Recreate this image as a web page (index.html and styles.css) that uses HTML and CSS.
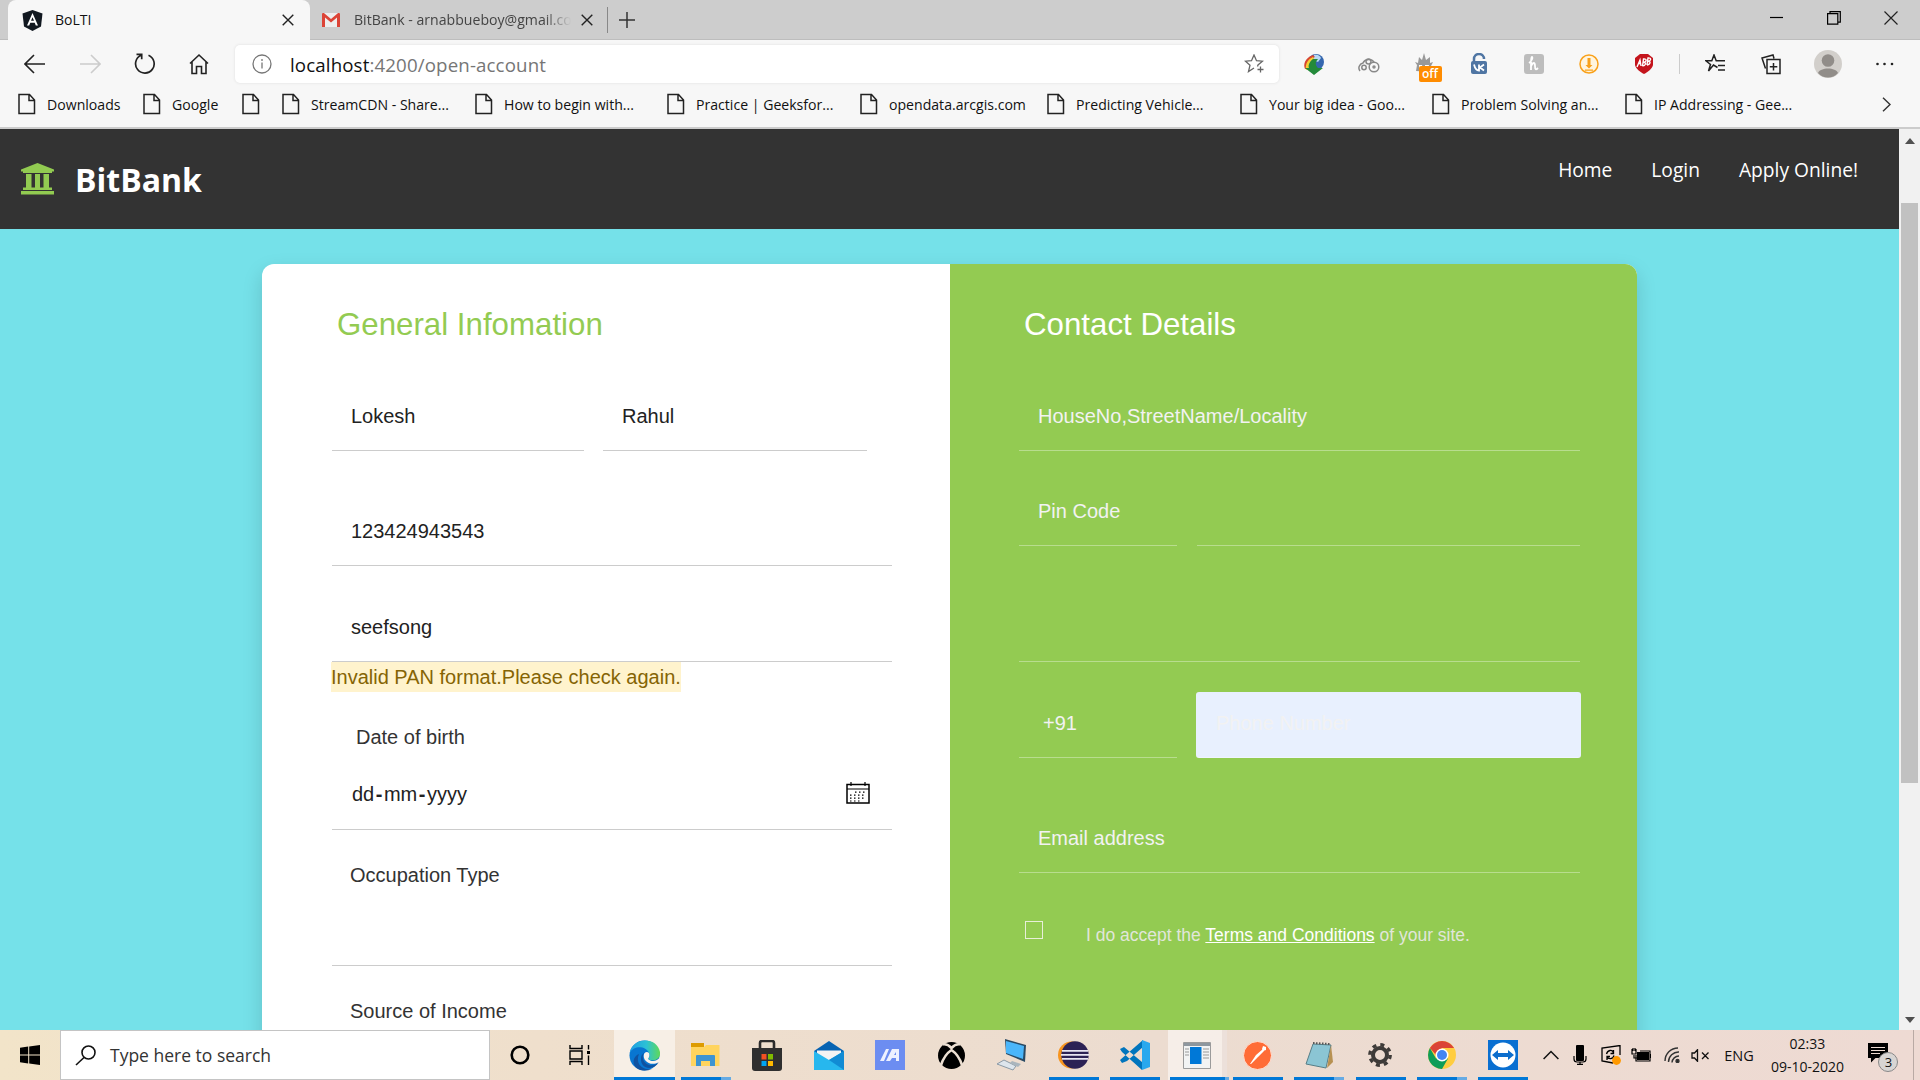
FILE: index.html
```html
<!DOCTYPE html>
<html lang="en">
<head>
<meta charset="utf-8">
<title>BoLTI</title>
<link rel="stylesheet" href="styles.css">
</head>
<body>
<svg width="0" height="0" class="defs">
  <symbol id="page" viewBox="0 0 18 22"><path d="M1 1.5h10.5l5 5.5v13.500H1z M11 1.500V7.500h5.500" fill="none" stroke="#222" stroke-width="1.500"/></symbol>
  <symbol id="x" viewBox="0 0 12 12"><path d="M.7.7l10.600 10.600M11.300.7L.7 11.300" fill="none" stroke="#222" stroke-width="1.400"/></symbol>
</svg>
<div class="screen">
  <header class="tabs">
    <div class="tab active">
      <svg class="favicon" width="21" height="21" viewBox="0 0 21 21"><path d="M10.500 0L20.500 3.500 19 16.500 10.500 21 2 16.500.5 3.500z" fill="#111820"/><path d="M10.500 3L5 15.500h2.200l1.100-2.800h4.400l1.100 2.800H16zM10.500 7.200l1.500 3.600H9z" fill="#fff" fill-rule="evenodd"/></svg>
      <span class="tab-title">BoLTI</span>
      <svg class="close" width="12" height="12"><use href="#x"/></svg>
    </div>
    <div class="tab second">
      <svg class="favicon" width="18" height="14" viewBox="0 0 18 14"><path d="M1 0h16v14H1z" fill="#eee"/><path d="M0 1.500V14h3V4.500l6 5 6-5V14h3V1.500C18 0 16.500-.3 15.500.5L9 6 2.500.5C1.500-.3 0 0 0 1.500z" fill="#dc4437"/></svg>
      <span class="tab-title fade">BitBank - arnabbueboy@gmail.com</span>
      <svg class="close" width="12" height="12"><use href="#x"/></svg>
    </div>
    <svg class="newtab" width="18" height="18" viewBox="0 0 18 18"><path d="M9 1v16M1 9h16" stroke="#333" stroke-width="1.500"/></svg>
    <div class="winbtns">
      <svg width="14" height="14"><path d="M0 6.500h13" stroke="#000" stroke-width="1.200"/></svg>
      <svg width="14" height="14" fill="none" stroke="#000" stroke-width="1.200"><path d="M.6 2.600h10.200v10.600H.6zM3 2.500V.6h10.300v10.600H11"/></svg>
      <svg width="14" height="14"><path d="M.5.5l13 13M13.500.5l-13 13" stroke="#222" stroke-width="1.200"/></svg>
    </div>
  </header>

  <div class="toolbar">
    <div class="nav">
      <svg width="22" height="20" fill="none" stroke="#222" stroke-width="1.600"><path d="M21 10H1M10 1L1 10l9 9"/></svg>
      <svg width="22" height="20" fill="none" stroke="#ccc" stroke-width="1.600"><path d="M1 10h20M12 1l9 9-9 9"/></svg>
      <svg width="22" height="22" fill="none" stroke="#222" stroke-width="1.700"><path d="M14.500 2.200A9.300 9.300 0 1 1 7 2.300M2.500 1.300h5.200v5"/></svg>
      <svg width="20" height="22" fill="none" stroke="#222" stroke-width="1.600"><path d="M1 10.500L10 2l9 8.500M3 9v11.500h4.500v-7h5v7H17V9"/></svg>
    </div>
    <div class="address">
      <svg width="20" height="20" fill="none" stroke="#777" stroke-width="1.300"><circle cx="10" cy="10" r="9"/><path d="M10 8.500v6M10 5v2"/></svg>
      <span class="url"><b>localhost</b>:4200/open-account</span>
      <svg class="star" width="20" height="20" viewBox="0 0 20 20" fill="none" stroke="#666" stroke-width="1.300"><path d="M13.500 12.500L14 11l4.500-3.800-6-.5L10 1 7.500 6.700l-6 .5L6 11.200 4.500 17.500 10 14M16.500 12.500v6M13.500 15.500h6"/></svg>
    </div>
    <div class="exts">
      <svg width="22" height="22" viewBox="0 0 22 22"><circle cx="13" cy="9" r="8" fill="#3567ae"/><path d="M11 2c4-1 6 1 7 3l-3 4-5-2z" fill="#b8d8f4"/><path d="M10 2C2 5 0 11 2 16l3-1C5 10 7 6 12 4z" fill="#d8452f"/><path d="M10 4C5 6 2 11 3 17l3-1c0-5 1-8 5-10z" fill="#f3cf35"/><path d="M10 6c-4 3-5 7-4 9H2l9 7 9-7h-5c-3-3-3-6 0-9z" fill="#238a3a"/></svg>
      <svg width="22" height="18" viewBox="0 0 22 18" fill="none" stroke="#888" stroke-width="1.500"><path d="M2 16a5 5 0 0 1 3-8 6 5 0 0 1 11-1"/><circle cx="16" cy="12" r="4.800"/><circle cx="10.500" cy="6.500" r="2.500"/><circle cx="16" cy="12" r="1"/><circle cx="6" cy="12.500" r="2.200"/></svg>
      <div class="off-wrap"><svg width="22" height="22" viewBox="0 0 22 22"><path d="M3 18l1-6-2-3 3 1 1-6 3 3 2-7 2 7 4-3v6l3-1-2 4v6z" fill="#999"/><path d="M6 12h3l1 4H6zM12 12h4l-1 4h-3z" fill="#fff"/></svg><span class="off">off</span></div>
      <svg width="18" height="22" viewBox="0 0 18 22"><path d="M4 9V6a5 5 0 0 1 10 0" fill="none" stroke="#4f75a3" stroke-width="2.500"/><rect x="1" y="8" width="16" height="13" rx="2" fill="#4f75a3"/><path d="M4 11.500c1 4 3 6 5 6v-6M14 11.500l-4 3 4 3" fill="none" stroke="#fff" stroke-width="1.800"/></svg>
      <svg width="20" height="20" viewBox="0 0 20 20"><rect width="20" height="20" rx="3" fill="#bdbdbd"/><path d="M5 9c3-2 4-6 3-6S7 8 7 16M7 12c2-4 4-4 4 0 0 4 1 4 3 2" fill="none" stroke="#fff" stroke-width="1.800"/></svg>
      <svg width="20" height="20" viewBox="0 0 20 20"><circle cx="10" cy="10" r="9" fill="#fff5df" stroke="#f9a11b" stroke-width="1.500"/><path d="M8.500 4h3v7h2L10 14.500 6.500 11h2zM6 15.500h8v1.200H6z" fill="#f9a11b"/></svg>
      <svg width="20" height="20" viewBox="0 0 20 20"><path d="M6 0h8l5 4v7c-1 4-5 7-9 9-4-2-8-5-9-9V4z" fill="#c4141c"/><path d="M3 13l3-7 1 6M4 10l3-1M8.500 12l1-7c4-.5 3 3 0 3.300 3.500 0 2 3.700-1 3.700M13 11l1-7c4-.5 3 3 0 3.200 3.500 0 2 3.700-1 3.800" fill="none" stroke="#fff" stroke-width="1.400"/></svg>
    </div>
    <div class="sep"></div>
    <div class="edgebtns">
      <svg width="22" height="20" fill="none" stroke="#222" stroke-width="1.500"><path d="M12.500 13.500l-4-2.500L3.500 17 5.500 10.500.8 6.800h6L9 1l2.200 5.800H20M13 11.500h7M13 16h7"/></svg>
      <svg width="22" height="21" fill="none" stroke="#222" stroke-width="1.500"><path d="M4.500 14.500L1 4l11-3 1 3.500M6 5.500h13v14H6zM12.500 9v7.500M8.800 12.700h7.500"/></svg>
      <svg width="28" height="28" viewBox="0 0 28 28"><circle cx="14" cy="14" r="14" fill="#d2cfcb"/><circle cx="14" cy="10.500" r="6.300" fill="#918d89"/><path d="M4 23c2-6 18-6 20 0-5 6-15 6-20 0z" fill="#918d89"/></svg>
      <svg width="20" height="4"><g fill="#222"><circle cx="2.500" cy="2" r="1.300"/><circle cx="9.500" cy="2" r="1.300"/><circle cx="17" cy="2" r="1.300"/></g></svg>
    </div>
  </div>

  <div class="bookmarks">
    <div><svg><use href="#page"/></svg><span>Downloads</span></div>
    <div><svg><use href="#page"/></svg><span>Google</span></div>
    <div><svg><use href="#page"/></svg></div>
    <div><svg><use href="#page"/></svg><span>StreamCDN - Share...</span></div>
    <div><svg><use href="#page"/></svg><span>How to begin with...</span></div>
    <div><svg><use href="#page"/></svg><span>Practice | Geeksfor...</span></div>
    <div><svg><use href="#page"/></svg><span>opendata.arcgis.com</span></div>
    <div><svg><use href="#page"/></svg><span>Predicting Vehicle...</span></div>
    <div><svg><use href="#page"/></svg><span>Your big idea - Goo...</span></div>
    <div><svg><use href="#page"/></svg><span>Problem Solving an...</span></div>
    <div><svg><use href="#page"/></svg><span>IP Addressing - Gee...</span></div>
    <svg class="more" viewBox="0 0 9 15"><path d="M1 .7l7 6.800-7 6.800" fill="none" stroke="#333" stroke-width="1.400"/></svg>
  </div>

  <div class="viewport">
    <main class="site">
      <nav class="navbar">
        <svg class="bank" width="33" height="32" viewBox="0 0 33 32"><path d="M16.500 0L33 6.500V8.500H31V10H2V8.500H0V6.500zM5 11h5.500v14H5zM14 11h5v14h-5zM22.500 11H28v14h-5.500zM2 24.500h29V27H2zM0 28h33v3.500H0z" fill="#92cb51"/></svg>
        <span class="brand">BitBank</span>
        <div class="links"><a>Home</a><a>Login</a><a>Apply Online!</a></div>
      </nav>
      <form class="card">
        <section class="general">
          <h2>General Infomation</h2>
          <div class="row names"><div class="field">Lokesh</div><div class="field">Rahul</div></div>
          <div class="field aadhaar">123424943543</div>
          <div class="field pan">seefsong</div>
          <div class="warn">Invalid PAN format.Please check again.</div>
          <div class="label dob">Date of birth</div>
          <div class="field date"><span>dd<i>-</i>mm<i>-</i>yyyy</span>
            <svg width="24" height="24" viewBox="0 0 24 24" fill="none" stroke="#000"><path d="M1 3.500h22v18.500H1z" stroke-width="1.500"/><path d="M1 8h22M5 1v4M19 1v4" stroke-width="1.200"/><path d="M9 11.200h10M4 14.200h15M4 17.200h15M4 20h11" stroke-width="1.200" stroke-dasharray="1.500 2.500"/></svg>
          </div>
          <div class="label occupation">Occupation Type</div>
          <div class="field select"></div>
          <div class="label income">Source of Income</div>
        </section>
        <section class="contact">
          <h2>Contact Details</h2>
          <div class="field house">HouseNo,StreetName/Locality</div>
          <div class="row pin"><div class="field">Pin Code</div><div class="field"></div></div>
          <div class="field state"></div>
          <div class="row phone"><div class="field code">+91</div><div class="field number">Phone Number</div></div>
          <div class="field email">Email address</div>
          <div class="terms"><span class="box"></span><p>I do accept the <a>Terms and Conditions</a> of your site.</p></div>
        </section>
      </form>
    </main>
    <div class="scrollbar">
      <svg width="10" height="6"><path d="M0 6l5-6 5 6z" fill="#505050"/></svg>
      <div class="thumb"></div>
      <svg width="10" height="6"><path d="M0 0l5 6 5-6z" fill="#505050"/></svg>
    </div>
  </div>

  <footer class="taskbar">
    <div class="start"><svg width="20" height="20" viewBox="0 0 20 20"><path d="M0 2.800L8.200 1.600V9.500H0zM9.200 1.400L20 0v9.500H9.200zM0 10.500h8.200v7.900L0 17.200zM9.200 10.500H20V20L9.200 18.600z"/></svg></div>
    <div class="search"><svg width="22" height="21" viewBox="0 0 22 21" fill="none" stroke="#111" stroke-width="1.600"><circle cx="13.500" cy="7.500" r="6.500"/><path d="M9 12.500L1 20"/></svg><span>Type here to search</span></div>
    <div class="shell">
      <svg width="20" height="20"><circle cx="10" cy="10" r="8.300" fill="none" stroke="#000" stroke-width="2.600"/></svg>
      <svg width="22" height="20" fill="none" stroke="#000" stroke-width="1.400"><path d="M1 0v3.500h12V0M1 20v-3.500h12V20M1 6h12v8H1zM19.500 0v4.500M19.500 10.500V20"/><path d="M18 6h3v3h-3z" fill="#000" stroke="none"/></svg>
    </div>
    <div class="apps">
      <div class="app on wide"><svg width="31" height="31" viewBox="0 0 31 31"><defs><linearGradient id="eg"><stop offset="0" stop-color="#209ee2"/><stop offset=".55" stop-color="#2cc1d5"/><stop offset="1" stop-color="#60d958"/></linearGradient></defs><circle cx="15.500" cy="15.500" r="15" fill="#0876d1"/><path d="M.8 13C3-3 28-4 31 12c1 8-7 10-12 7 2-2 2-4 1-6-3-7-15-8-19.200 0z" fill="url(#eg)"/><path d="M10 14c-4 9 3 17 13 15-5 2-10 2-14 0-7-4-5-13 1-15z" fill="#1052a0"/><path d="M16 12c-3 2-4 10 4 13 4 1 8-1 10-3-5 9-19 8-18-4 0-2 1-4 4-6z" fill="#1052a0"/><path d="M20 13c1 3 0 4-1 6 3 3 9 3 12-2l-1 5c-8 5-17-1-15-8 1-2 3-3 5-1z" fill="#faf3ed"/></svg></div>
      <div class="app run stack"><svg width="29" height="26" viewBox="0 0 29 26"><path d="M0 1h13v7H0z" fill="#dd9b00"/><path d="M0 5h13l2-2h13.500v21H0z" fill="#ffd45e"/><path d="M5 24V14q0-1 1-1h17q1 0 1 1v10h-5v-5h-9v5z" fill="#3d94d1"/></svg></div>
      <div class="app"><svg width="30" height="31" viewBox="0 0 30 31"><path d="M8 9V3q0-2 2-2h10q2 0 2 2v6" fill="none" stroke="#2c2c2c" stroke-width="2.600"/><path d="M0 8h30v20q0 3-3 3H3q-3 0-3-3z" fill="#2f2f2f"/><path d="M9.500 14h5v5.500h-5z" fill="#f25022"/><path d="M16 14h5v5.500h-5z" fill="#7fba00"/><path d="M9.500 21h5v5h-5z" fill="#00a4ef"/><path d="M16 21h5v5h-5z" fill="#ffb900"/></svg></div>
      <div class="app"><svg width="30" height="29" viewBox="0 0 30 29"><path d="M0 10L15 0l15 10v5H0z" fill="#0763b2"/><path d="M3 9.500h24v8L15 24 3 16z" fill="#f3f3f3"/><path d="M0 10l15 9L30 10v19H0z" fill="#27b7ee"/><path d="M15 19L30 29V10z" fill="#118bd4"/></svg></div>
      <div class="app"><svg width="30" height="30"><path d="M0 0h30v30H0z" fill="#6c8df1"/><path d="M5 21L11 9h3L9 21zM11 21L17 9h7v12h-3v-3h-4l-2 3zM19 15h2v-3z" fill="#edf1ff"/></svg></div>
      <div class="app"><svg width="27" height="27" viewBox="0 0 27 27"><circle cx="13.500" cy="13.500" r="13.500"/><path d="M5 2.500c4-1 7 2 8.500 3.500C15 4.500 18 1.500 22 2.500M3 23C5 17 9 11 13.500 8 18 11 22 17 24 23" fill="none" stroke="#ecdfd2" stroke-width="2.600"/></svg></div>
      <div class="app"><svg width="30" height="32" viewBox="0 0 30 32"><path d="M8 0l21 6-1 17L9 15z" fill="#2a4a64"/><path d="M9 2l18 5-1 13-17-6z" fill="#4bb6fa"/><path d="M0 25l7-4 12 6-3 4z" fill="#dde5ec" stroke="#8a99a5"/><path d="M15 22l9 3-3 3-8-4z" fill="#aab5bd"/></svg></div>
      <div class="app run"><svg width="31" height="28" viewBox="0 0 31 28"><circle cx="13.500" cy="14" r="13.500" fill="#f7941e"/><circle cx="17" cy="14" r="13.700" fill="#2c2255"/><path d="M4 9.800h26M3 13.800h28M4 17.800h26" stroke="#e8e6f2" stroke-width="1.800"/></svg></div>
      <div class="app run"><svg width="30" height="30" viewBox="0 0 30 30"><path d="M0 9l4-2 18 15V30L2 12zM0 20l2 3 5-2L23 7V0z" fill="#0075bd"/><path d="M22 0l8 3v24l-8 3z" fill="#29a8ee"/></svg></div>
      <div class="app on stack tail"><svg width="28" height="27" viewBox="0 0 28 27"><path d="M.5.5h27v26H.5z" fill="#f2f3f3" stroke="#9b9b9b"/><path d="M1 1h26v3H1z" fill="#8e979e"/><path d="M7 5h11.500v17H7z" fill="#0078d7"/><path d="M2 7h4M2 10h4M2 13h4M20 7h6M20 10h6M20 13h6M20 16h6" stroke="#999"/></svg></div>
      <div class="app run"><svg width="29" height="29" viewBox="0 0 29 29"><circle cx="14.500" cy="14.500" r="14" fill="#ff6c37" stroke="#ffe1d5"/><path d="M7 23l6-9 7-6 1 2-6 6-7 7zM19 8l1-3 3 1v3l-3 1z" fill="#fff"/></svg></div>
      <div class="app run stack"><svg width="28" height="28" viewBox="0 0 28 28"><path d="M8 3l18 1-5 23L1 23z" fill="#8bc5d4" stroke="#577e87"/><path d="M26 4l2 17-6 6z" fill="#b79152"/><path d="M8 2l17 1" stroke="#555" stroke-width="2" stroke-dasharray="1.500 1.500"/></svg></div>
      <div class="app run"><svg width="24" height="24" viewBox="0 0 24 24"><circle cx="12" cy="12" r="7" fill="none" stroke="#3e3b39" stroke-width="4"/><circle cx="12" cy="12" r="10.200" fill="none" stroke="#3e3b39" stroke-width="3.400" stroke-dasharray="4 4.010"/></svg></div>
      <div class="app run stack"><svg width="28" height="28" viewBox="0 0 28 28"><circle cx="14" cy="14" r="14" fill="#ffcd40"/><path d="M1.900 7A14 14 0 0 0 14 28l6-10.500H8z" fill="#0f9d58"/><path d="M1.900 7A14 14 0 0 1 26.100 7H14l-6 7z" fill="#db4437"/><circle cx="14" cy="14" r="6.500" fill="#fff"/><circle cx="14" cy="14" r="5" fill="#4285f4"/></svg></div>
      <div class="app run"><svg width="30" height="30" viewBox="0 0 30 30"><path d="M0 0h30v30H0z" fill="#096fd1"/><circle cx="15" cy="15" r="12.500" fill="#fff"/><path d="M4 15l6-5v3h10v-3l6 5-6 5v-3H10v3z" fill="#0d6ecd"/></svg></div>
    </div>
    <div class="tray">
      <svg width="16" height="10" viewBox="0 0 16 10" fill="none" stroke="#111" stroke-width="1.500"><path d="M.6 9L8 1.500 15.400 9"/></svg>
      <svg width="14" height="20" viewBox="0 0 14 20"><rect x="3" width="8" height="16" rx="1"/><path d="M1 11v3q0 3 3 3h6q3 0 3-3v-3M7 17v2M4 19.300h6" fill="none" stroke="#000" stroke-width="1.200"/></svg>
      <svg width="20" height="20" viewBox="0 0 20 20" fill="none" stroke="#000" stroke-width="1.300"><path d="M12 18L1 16V3l18-2.500V10M5.500 9c1-4 6-5 7-1M12.500 5v3.500H9.500M13 10.500c-1 4-6 4-7 1M6 15v-3.500h3"/><circle cx="15.500" cy="15.500" r="4.400" fill="#f90" stroke="none"/></svg>
      <svg width="20" height="14" viewBox="0 0 20 14"><path d="M6 4h12v8H6z"/><path d="M5 7v6h14V3H9M3 7v3h3M19.500 6v4M1 1v5h4V1M2 3V0M4 3V0" fill="none" stroke="#000" stroke-width="1.200"/></svg>
      <svg width="16" height="16" viewBox="0 0 16 16" fill="none" stroke="#333" stroke-width="1.400"><path d="M1 14A13 13 0 0 1 14 1M4.500 15A10 10 0 0 1 15 5M8 15.500A7 7 0 0 1 15 9"/><circle cx="13.500" cy="14" r="1.500" fill="#222"/></svg>
      <svg width="19" height="13" viewBox="0 0 19 13" fill="none" stroke="#111" stroke-width="1.300"><path d="M1 4h2.500l3-3.300v11.600L3.500 9H1zM11 3.500l6.500 6.500M17.500 3.500L11 10"/></svg>
      <span class="lang">ENG</span>
      <div class="clock"><span>02:33</span><span>09-10-2020</span></div>
      <div class="notes"><svg width="22" height="20" viewBox="0 0 22 20"><path d="M0 0h20v15H7.500L3 19.500V15H0z"/><path d="M3 4.500h14M3 7.500h14M3 10.500h9" stroke="#eedbd2" stroke-width="1.200"/></svg><span class="badge">3</span></div>
      <div class="desk"></div>
    </div>
  </footer>
</div>
</body>
</html>
```
FILE: styles.css
```css
* { box-sizing: border-box; }
body { margin: 0; }
svg { display: block; flex: none; }
.defs { position: absolute; }
.screen { width: 1920px; height: 1080px; display: flex; flex-direction: column; overflow: hidden; font-family: "Open Sans", "Noto Sans", sans-serif; font-size: 14px; color: #111; }

/* tab strip */
.tabs { height: 40px; flex: none; display: flex; background: #cdcdcd; padding-left: 8px; box-shadow: inset 0 -1px #bdbdbd; }
.tab { display: flex; align-items: center; height: 40px; }
.tab .close { margin-left: auto; }
.tab-title { white-space: nowrap; margin-left: 12px; padding-bottom: 2px; }
.active { width: 302px; background: #f7f7f7; border-radius: 8px 8px 0 0; padding: 0 16px 0 14px; }
.second { width: 299px; padding: 0 15px 0 12px; color: #444; }
.second .tab-title { margin-left: 14px; width: 217px; overflow: hidden; font-size: 14.100px; }
.fade { -webkit-mask-image: linear-gradient(90deg, #000 88%, transparent); mask-image: linear-gradient(90deg, #000 88%, transparent); }
.second::after { content: ""; width: 1px; height: 26px; background: #888; margin-left: 14px; margin-right: -14px; }
.newtab { margin: 11px 0 0 9px; }
.winbtns { margin-left: auto; display: flex; align-items: center; height: 36px; gap: 43px; padding-right: 22px; }

/* toolbar */
.toolbar { height: 48px; flex: none; display: flex; align-items: center; background: #f7f7f7; }
.nav { width: 235px; display: flex; align-items: center; gap: 33px; padding-left: 24px; }
.address { width: 1044px; height: 38px; display: flex; align-items: center; background: #fff; border-radius: 5px; box-shadow: 0 0 3px #ddd; padding: 0 15px 0 17px; }
.url { margin-left: 18px; font-size: 18.700px; color: #767676; letter-spacing: .13px; }
.url b { font-weight: 400; color: #111; }
.star { margin-left: auto; }
.exts { display: grid; grid-template-columns: repeat(7, 55px); justify-items: center; align-items: center; margin-left: 7px; }
.off-wrap { position: relative; }
.off { position: absolute; left: 6px; top: 13px; width: 23px; height: 16px; border-radius: 2px; background: #ff8c00; color: #fff; font: 600 12px/15px "Open Sans", sans-serif; text-align: center; }
.sep { width: 1px; height: 20px; background: #ccc; margin: 0 7px 0 8px; }
.edgebtns { display: grid; grid-template-columns: 57px 55px 57px 57px; justify-items: center; align-items: center; }

/* bookmarks */
.bookmarks { height: 41px; flex: none; display: grid; grid-template-columns: 125px 99px 40px 193px 192px 193px 187px 193px 192px 193px 257px 9px; align-items: center; padding: 0 0 7px 18px; background: #f7f7f7; border-bottom: 2px solid #ccc; }
.bookmarks div { display: flex; align-items: center; gap: 11px; white-space: nowrap; height: 24px; font-size: 14.100px; }
.bookmarks div svg { width: 18px; height: 22px; }
.bookmarks .more { width: 9px; height: 15px; }

/* page */
.viewport { flex: 1; min-height: 0; display: flex; background: #75e1e9; }
.site { width: 1899px; overflow: hidden; font-family: "Liberation Sans", Arial, sans-serif; font-size: 20px; }
.navbar { height: 100px; background: #333; display: flex; align-items: center; padding: 0 41px 0 21px; font-family: "Open Sans", sans-serif; color: #fff; }
.brand { font-size: 32px; font-weight: 700; margin-left: 21px; }
.links { display: flex; gap: 39px; margin-left: auto; font-size: 19.200px; padding-bottom: 19px; }
.card { width: 1375px; height: 1000px; margin: 35px 0 0 262px; display: flex; background: #fff; border-radius: 12px; box-shadow: 0 8px 20px rgba(0,0,0,.15); overflow: hidden; }
.general { width: 688px; padding: 37px 58px 0 70px; color: #222; }
.contact { width: 687px; padding: 37px 57px 0 69px; background: #93cb52; color: #f2f2f2; }
h2 { margin: 0 0 36px 5px; font-size: 31.250px; font-weight: 400; line-height: 48px; color: #93cb52; }
.contact h2 { color: #fff; }
.row { display: flex; }
.field { height: 66px; line-height: 62px; padding-left: 19px; border-bottom: 1px solid #ccc; white-space: nowrap; }
.contact .field { border-color: rgba(255,255,255,.35); }
.label { line-height: 24px; color: #333; }
.names { gap: 19px; }
.names .field:first-child { width: 252px; }
.names .field:last-child { width: 264px; }
.aadhaar { margin-top: 49px; }
.pan { margin-top: 30px; }
.warn { display: inline-block; vertical-align: top; height: 30px; line-height: 30px; margin-left: -1px; background: #fff3cd; color: #856404; white-space: nowrap; }
.dob { margin: 33px 0 0 24px; }
.date { display: flex; justify-content: space-between; margin-top: 15px; padding: 0 22px 0 20px; line-height: 60px; }
.date i { font-style: normal; font-weight: 700; margin: 0 1.500px; }
.date svg { margin-top: 17px; }
.occupation { margin: 33px 0 0 18px; }
.select { margin-top: 13px; }
.income { margin: 33px 0 0 18px; }
.pin { gap: 20px; margin-top: 29px; }
.pin .field:first-child, .code { width: 158px; }
.pin .field:last-child { width: 383px; }
.state { margin-top: 50px; }
.phone { gap: 19px; margin-top: 30px; margin-right: -1px; }
.contact .code { padding-left: 24px; }
.contact .number { width: 385px; padding-left: 20px; background: #e8f0fe; border-radius: 3px; }
.email { margin-top: 49px; }
.terms { display: flex; margin: 48px 0 0 6px; }
.box { width: 18px; height: 18px; border: 1px solid #e8efd9; }
.terms p { margin: 4px 0 0 43px; font-size: 17.500px; line-height: 20px; color: #e1e6da; white-space: nowrap; }
.terms a { color: #fff; text-decoration: underline; }
.scrollbar { width: 21px; background: #f1f1f1; display: flex; flex-direction: column; align-items: center; padding: 9px 0 7px; }
.thumb { width: 17px; height: 580px; margin-top: 59px; margin-bottom: auto; background: #c1c1c1; }

/* taskbar */
.taskbar { height: 50px; flex: none; display: flex; background: linear-gradient(90deg, #f2e4c9, #efdfcc 28%, #ecdcd0 60%, #eedad3); }
.start { width: 60px; flex: none; padding: 15px 20px; }
.search { width: 430px; flex: none; background: #fff; border: 1px solid #c4c4c4; display: flex; align-items: center; padding-left: 14px; }
.search span { font-size: 17.500px; margin-left: 13px; color: #333; }
.shell { width: 124px; flex: none; display: flex; padding: 15px 0 0 20px; gap: 39px; }
.apps { flex: none; display: grid; grid-template-columns: repeat(15, 61.300px); }
.app { position: relative; display: flex; align-items: center; justify-content: center; }
.on { background: rgba(255,255,255,.5); }
.run::after, .on::after { content: ""; position: absolute; bottom: 0; left: 6px; width: 50px; height: 3px; background: #0078d7; }
.wide::after { left: 0; width: 61px; }
.stack::after { background: linear-gradient(90deg, #0078d7 80%, #66abe4 80%); }
.tail::after { left: 2px; width: 59px; background: linear-gradient(90deg, #0078d7 93%, #66abe4 93%); }
.tail { border-left: 2px solid #ecdcd0; box-shadow: inset -5px 0 rgba(230,215,208,.6); }
.tray { flex: none; width: 386px; display: grid; grid-template-columns: 35px 24px 38px 22px 40px 16px 61px 76px 68px 1px; justify-items: center; align-items: center; }
.lang { font-size: 14.500px; }
.clock { display: flex; flex-direction: column; align-items: center; line-height: 23px; }
.notes { position: relative; justify-self: start; margin: -4px 0 0 23px; }
.badge { position: absolute; left: 10px; top: 9px; width: 20px; height: 20px; border: 1px solid #888; border-radius: 50%; background: #d8d5d3; text-align: center; line-height: 18px; font-size: 13px; }
.desk { width: 1px; height: 50px; background: #b9aaa4; }
```
